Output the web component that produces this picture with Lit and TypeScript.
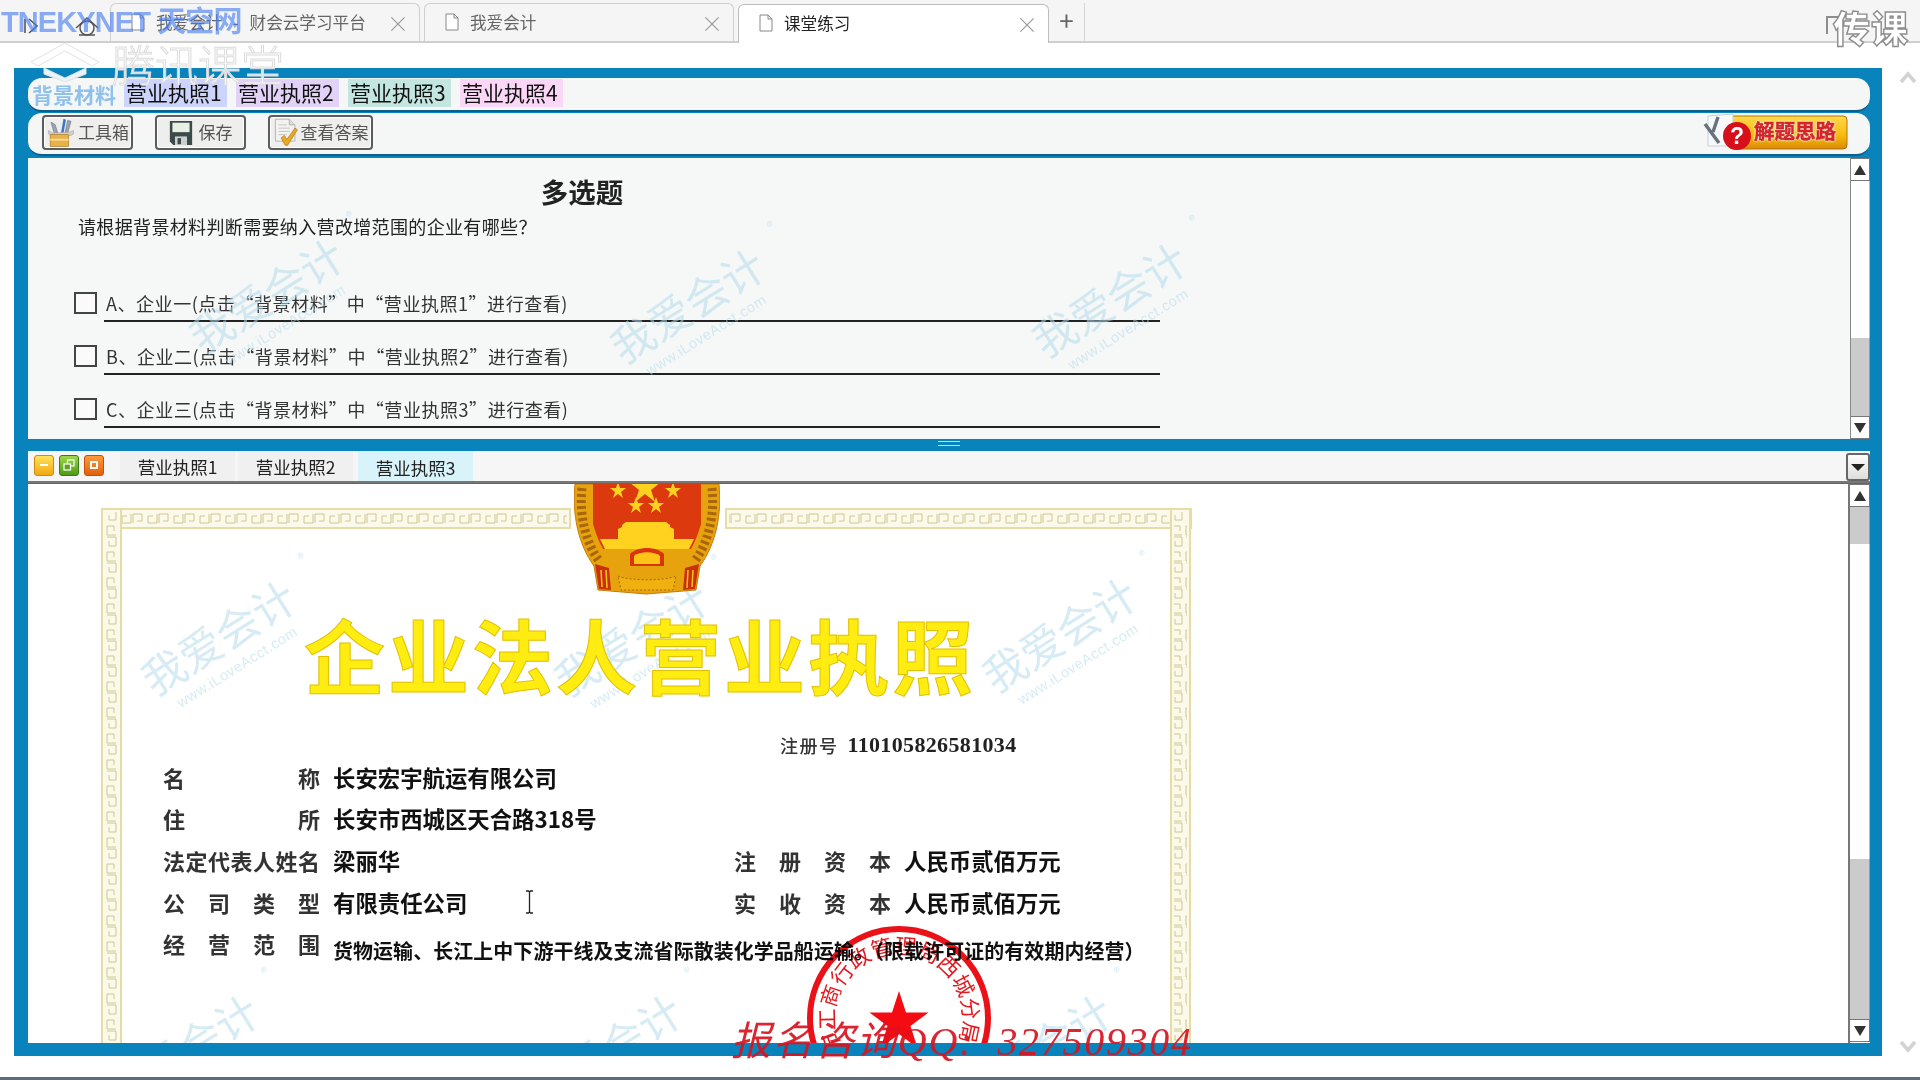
import { LitElement, html, css, svg } from "lit";
import { customElement } from "lit/decorators.js";

const CJK = `"Noto Sans CJK SC", "Liberation Sans", sans-serif`;

const docIcon = html`<svg class="doc" width="14" height="18" viewBox="0 0 14 18"><path d="M1 1h8l4 4v12H1zM9 1v4h4" fill="#fff" stroke="#888" stroke-width="1"/></svg>`;

const toolIcon = html`<svg width="30" height="30" viewBox="0 0 36 34">
  <path d="M6 4l5 3 3 10-4 1zM26 2l-3 14 3 1 4-14z" fill="#9aa6b4" stroke="#667" stroke-width=".7"/>
  <path d="M21 0l3 1-3 16h-3z" fill="#3d74c8"/>
  <path d="M3 14l5 3 20-1 5-2v4l-3 2H5l-2-2z" fill="#d6d0b8" stroke="#99a" stroke-width=".6"/>
  <rect x="5" y="19" width="22" height="14" fill="#eab14a" stroke="#a87720" stroke-width=".8"/>
  <rect x="5" y="24" width="22" height="2" fill="#fbe4a0"/>
</svg>`;

const saveIcon = html`<svg width="24" height="26" viewBox="0 0 28 30">
  <path d="M1 1h26v28H5l-4-4z" fill="#3c4a4a"/>
  <rect x="4" y="3" width="20" height="11" fill="#e8f0e4"/>
  <rect x="7" y="19" width="14" height="10" fill="#c9d0d0"/>
  <rect x="10" y="21" width="4" height="7" fill="#3c4a4a"/>
</svg>`;

const checkIcon = html`<svg width="26" height="30" viewBox="0 0 32 36">
  <path d="M3 1h17l7 7v20H3z" fill="#f2f2f0" stroke="#aaa"/>
  <path d="M20 1v7h7" fill="#ddd" stroke="#aaa"/>
  <path d="M7 8h10M7 12h14M7 16h14M7 20h10" stroke="#bbb"/>
  <path d="M10 24l4-3 3 5 10-14 3 2-12 19h-3z" fill="#eda91d" stroke="#a46b0b" stroke-width=".8"/>
</svg>`;

const TOP_MARKS = [
  [243, 149], [664, 159], [1086, 153],
];
const DOC_MARKS = [
  [195, 165], [608, 166], [1036, 162], [158, 579], [581, 579], [1011, 579],
];

const KEY = svg`<defs><pattern id="keyH" width="26" height="13" patternUnits="userSpaceOnUse" patternTransform="translate(0 28)">
  <path d="M1 11V2h9v7H5M25 2v9h-9V4h5" fill="none" stroke="#cfc690" stroke-width="1"/>
</pattern>
<pattern id="keyV" width="13" height="26" patternUnits="userSpaceOnUse" patternTransform="translate(77 0)">
  <path d="M2 1h9v9H4V5M11 25H2v-9h7v5" fill="none" stroke="#cfc690" stroke-width="1"/>
</pattern></defs>`;

function band(x: number, y: number, w: number, h: number, horizontal: boolean) {
  return svg`<rect x=${x} y=${y} width=${w} height=${h} fill="#fbf9ea" stroke="#e6dca6" stroke-width="2"/>
    <rect x=${x + 3} y=${y + 3} width=${w - 6} height=${h - 6} fill=${horizontal ? "url(#keyH)" : "url(#keyV)"}/>`;
}

@customElement("app-root")
export class AppRoot extends LitElement {
  static styles = css`
    :host { display: block; width: 1920px; height: 1080px; position: relative; overflow: hidden; background: #fff; font-family: ${css([CJK] as any)}; color: #222; }
    * { box-sizing: border-box; }
    .tabbar { height: 43px; background: #f5f5f5; border-bottom: 2px solid #cfcfcf; display: flex; align-items: flex-end; padding-left: 110px; position: relative; }
    .nav { position: absolute; left: 24px; top: 16px; display: flex; gap: 37px; align-items: center; }
    .tab { height: 38px; width: 310px; margin-right: 4px; border: 1px solid #cfcfcf; border-bottom: none; border-radius: 6px 6px 0 0; display: flex; align-items: center; padding: 0 10px 2px 20px; font-size: 16.6px; color: #666; gap: 11px; }
    .tab.active { background: #fff; color: #222; height: 39px; margin-bottom: -2px; margin-right: 0; border-color: #bdbdbd; position: relative; width: 311px; }
    .tab .t { flex: 1; white-space: nowrap; word-spacing: 7px; }
    .tab .x { color: #999; font-size: 22px; font-weight: 300; line-height: 1; }
    .plus { width: 36px; height: 38px; border-right: 1px solid #d6d6d6; font-size: 26px; color: #666; text-align: center; line-height: 34px; }

    .stage { padding: 25px 0 0 14px; }
    .frame { width: 1868px; height: 988px; background: #0883bc; padding: 10px 12px 13px 14px; display: flex; flex-direction: column; }
    .row1 { height: 34px; flex: none; background: #f5f6f6; border-radius: 14px; border-bottom: 2px solid #0c5f88; display: flex; align-items: flex-start; padding: 1px 0 0 4px; gap: 9px; }
    .bglabel { font-size: 21px; line-height: 30px; font-weight: 700; color: #8fc1ec; width: 84px; white-space: nowrap; margin-right: -1px; }
    .mat { width: 103px; height: 28px; font-size: 21px; line-height: 24px; padding: 0 0 2px 2px; display: flex; align-items: center; color: #111; white-space: nowrap; }
    .row2 { height: 43px; flex: none; margin-top: 1px; background: #f5f6f6; border-radius: 14px; border-bottom: 2px solid #0c5f88; display: flex; align-items: center; padding: 0 22px 2px 14px; }
    .btn { height: 35px; border: 2px solid #5c5c5c; border-radius: 4px; background: #eeeeec; display: flex; align-items: center; font-size: 17px; color: #555; box-shadow: inset 0 0 0 1px #fff; margin-right: 22px; white-space: nowrap; justify-content: center; gap: 2px; }
    .btn span { padding-bottom: 3px; }
    .btn svg { flex: none; }
    .help { margin-left: auto; width: 149px; height: 41px; position: relative; }
    .help svg { position: absolute; left: 0; top: 0; }
    .help span { position: absolute; left: 55px; top: 3px; font-size: 20.5px; font-weight: 700; color: #d8262c; -webkit-text-stroke: .4px #c01818; text-shadow: 0 0 2px #fff, 0 0 2px #fff, 0 0 3px #fff; white-space: nowrap; }

    .panel { height: 281px; flex: none; margin-top: 2px; background: #f6f7f7; display: flex; position: relative; overflow: hidden; }
    .qbody { flex: 1; padding-left: 46px; position: relative; min-width: 0; }
    .qtitle { width: 1016px; text-align: center; font-size: 27.5px; font-weight: 700; line-height: 36px; padding-top: 15px; height: 51px; color: #222; }
    .qtext { font-size: 18px; line-height: 28px; margin: 2px 0 0 4px; color: #222; padding-top: 1px; letter-spacing: .35px; }
    .opts { margin-top: 52px; }
    .opt { display: flex; align-items: flex-start; height: 53px; }
    .box { width: 23px; height: 22px; border: 2px solid #444; background: #fafafa; flex: none; }
    .optline { width: 1056px; margin-left: 7px; height: 30px; border-bottom: 2px solid #222; font-size: 18px; line-height: 22px; padding-left: 2px; letter-spacing: .55px; color: #333; white-space: nowrap; }

    .sbar { width: 20px; flex: none; display: flex; flex-direction: column; background: #fff; border-left: 1px solid #888; }
    .sbar.lower { width: 22px; border-left-width: 2px; border-left-color: #777; }
    .sbtn { flex: none; height: 23px; background: #fff; display: flex; align-items: center; justify-content: center; border: 1px solid #777; border-left: none; font-size: 0; }
    .seg { flex: none; }
    .seg.thumb { background: #cacbca; border-right: 1px solid #999; }
    .seg.track { background: #fff; border-right: 1px solid #bbb; }

    .split { height: 12px; flex: none; display: flex; align-items: center; justify-content: center; padding-bottom: 4px; }
    .split i { display: block; width: 22px; height: 5px; border-top: 1px solid #bfe0ee; border-bottom: 1px solid #bfe0ee; }

    .lowbar { height: 32px; flex: none; background: #f6f6f6; border-bottom: 2px solid #777; display: flex; align-items: stretch; position: relative; padding-left: 6px; }
    .lowbtns { display: flex; align-items: center; gap: 5px; width: 86px; flex: none; padding-bottom: 6px; padding-top: 4px; }
    .lowbtn { width: 20px; height: 21px; border-radius: 3px; display: flex; align-items: center; justify-content: center; flex: none; }
    .lowtab { width: 115px; flex: none; display: flex; align-items: center; justify-content: center; font-size: 17.5px; margin-right: 3px; background: #f0f0f0; color: #222; white-space: nowrap; }
    .lowtab.on { background: #d9f3fb; margin-left: 2px; padding-top: 3px; }
    .drop { position: absolute; right: 0; top: 2px; width: 24px; height: 28px; border: 2px solid #666; border-radius: 3px; background: linear-gradient(#fdfdfd, #dcdedc); display: flex; align-items: center; justify-content: center; }

    .docwrap { flex: 1; display: flex; background: #fff; min-height: 0; position: relative; margin-top: 1px; }
    .doc-pane { flex: 1; position: relative; overflow: hidden; background: #fff; min-width: 0; }
    .border { position: absolute; left: 0; top: 0; }
    .cert { padding: 124px 0 0 135px; position: relative; }
    .ctitle { font-size: 81px; line-height: 90px; letter-spacing: 3px; margin-left: 141px; font-weight: 700; color: #ffec10; -webkit-text-stroke: 1px #e2c000; white-space: nowrap; }
    .reg { margin: 35px 0 0 617px; height: 24px; display: flex; align-items: center; gap: 9px; white-space: nowrap; }
    .reg b { font-size: 18px; font-weight: 500; color: #333; letter-spacing: 1.5px; }
    .reg span { font-family: "Liberation Serif", serif; font-size: 22px; font-weight: 700; letter-spacing: .35px; color: #222; }
    .grid { display: grid; grid-template-columns: 170px 401px 170px auto; grid-auto-rows: 41.6px; margin-top: -1px; align-items: center; }
    .lab { width: 157px; font-size: 22px; font-weight: 700; color: #333; text-align: justify; text-align-last: justify; line-height: 30px; white-space: nowrap; }
    .val { font-size: 22.4px; font-weight: 700; color: #111; white-space: nowrap; line-height: 30px; display: flex; align-items: center; }
    .scope { grid-column: 2 / 5; font-size: 19.95px; font-weight: 700; padding-top: 16px; letter-spacing: .1px; }
    .ibeam { margin-left: 58px; flex: none; }

    .mark { position: absolute; width: 0; height: 0; color: #b5dcec; pointer-events: none; }
    .mark .in { position: absolute; left: -110px; top: -40px; width: 220px; transform: rotate(-32deg); text-align: center; white-space: nowrap; }
    .mark .big { font-size: 43px; line-height: 50px; opacity: .55; }
    .mark .small { font-family: "Liberation Sans", sans-serif; font-size: 14.5px; line-height: 17px; opacity: .55; letter-spacing: .6px; margin-top: 4px; }
    .mark .r { position: absolute; right: -6px; top: -6px; font-size: 13px; opacity: .6; }

    .emblem { position: absolute; left: 546px; top: 0; }
    .seal { position: absolute; left: 771px; top: 434px; mix-blend-mode: multiply; }

    .overlay { position: absolute; pointer-events: none; white-space: nowrap; }
    .tneky { left: 1px; top: -2px; font-family: "Liberation Sans", ${css([CJK] as any)}; font-size: 29px; font-weight: 700; color: rgba(70, 125, 240, .62); letter-spacing: -.9px; }
    .tencent { left: 112px; top: 31px; font-size: 43px; line-height: 64px; color: rgba(255, 255, 255, .85); -webkit-text-stroke: 1px #dcdcdc; font-weight: 300; }
    .tlogo { left: 30px; top: 42px; }
    .chuan { left: 1833px; top: 5px; font-size: 37px; line-height: 44px; font-weight: 900; color: #fff; -webkit-text-stroke: 1.4px #8d8d8d; letter-spacing: 1px; }
    .chuanb { left: 1826px; top: 16px; }
    .qq { left: 731px; top: 1017px; font-family: "Liberation Serif", ${css([CJK] as any)}; font-style: italic; font-size: 40px; line-height: 50px; color: rgba(216, 20, 32, .92); letter-spacing: 1.7px; }
    .chev { position: absolute; left: 1899px; }
    .foot { position: absolute; left: 0; right: 0; top: 1077px; height: 3px; background: #5d6c7a; }
  `;

  private mark(x: number, y: number) {
    return html`<div class="mark" style="left:${x}px;top:${y}px"><div class="in"><span class="r">®</span><div class="big">我爱会计</div><div class="small">www.iLoveAcct.com</div></div></div>`;
  }

  private up(color = "#333") {
    return html`<svg width="12" height="10" viewBox="0 0 12 10"><path d="M6 0l6 10H0z" fill=${color}/></svg>`;
  }
  private down(color = "#333") {
    return html`<svg width="12" height="10" viewBox="0 0 12 10"><path d="M0 0h12L6 10z" fill=${color}/></svg>`;
  }

  private scrollbar(segs: Array<[string, number]>, lower = false) {
    return html`<div class="sbar ${lower ? "lower" : ""}">
      <div class="sbtn">${this.up()}</div>
      ${segs.map(([k, h]) => html`<div class="seg ${k}" style="height:${h}px"></div>`)}
      <div class="sbtn">${this.down()}</div>
    </div>`;
  }

  render() {
    const opts = [
      "A、企业一(点击“背景材料”中“营业执照1”进行查看)",
      "B、企业二(点击“背景材料”中“营业执照2”进行查看)",
      "C、企业三(点击“背景材料”中“营业执照3”进行查看)",
    ];
    const mats = [
      ["营业执照1", "#ccd4fb"], ["营业执照2", "#e2d2f8"], ["营业执照3", "#c3e6e0"], ["营业执照4", "#fad6f7"],
    ];
    return html`
      <div class="tabbar">
        <div class="nav">
          <svg width="14" height="16" viewBox="0 0 14 16"><path d="M1 1v14M5 1l8 7-8 7" fill="none" stroke="#555" stroke-width="1.6"/></svg>
          <svg width="24" height="20" viewBox="0 0 24 20"><path d="M1 12L12 2l11 10" fill="none" stroke="#555" stroke-width="1.5"/><circle cx="12" cy="12" r="7" fill="none" stroke="#555" stroke-width="1.5"/><path d="M4 19h16" stroke="#555" stroke-width="1.5"/></svg>
        </div>
        <div class="tab">${docIcon}<span class="t">我爱会计 - 财会云学习平台</span><span class="x">×</span></div>
        <div class="tab">${docIcon}<span class="t">我爱会计</span><span class="x">×</span></div>
        <div class="tab active">${docIcon}<span class="t">课堂练习</span><span class="x">×</span></div>
        <div class="plus">+</div>
      </div>

      <div class="stage"><div class="frame">
        <div class="row1">
          <span class="bglabel">背景材料</span>
          ${mats.map(([t, c]) => html`<span class="mat" style="background:${c}">${t}</span>`)}
        </div>
        <div class="row2">
          <div class="btn" style="width:91px">${toolIcon}<span>工具箱</span></div>
          <div class="btn" style="width:91px;gap:6px">${saveIcon}<span>保存</span></div>
          <div class="btn" style="width:105px">${checkIcon}<span>查看答案</span></div>
          <div class="help">
            <svg width="149" height="41" viewBox="0 0 149 41">
              <defs><linearGradient id="gold" x1="0" y1="0" x2="0" y2="1"><stop offset="0" stop-color="#ffd94a"/><stop offset=".6" stop-color="#f7b90c"/><stop offset="1" stop-color="#d98a07"/></linearGradient></defs>
              <rect x="30" y="4" width="118" height="33" rx="4" fill="url(#gold)" stroke="#b5700e"/>
              <path d="M9 4L34 2v32H9z" fill="#f7f8fa" stroke="#c8d0dc"/>
              <path d="M6 12l14 19M19 5l-5 15" stroke="#66727c" stroke-width="3.400" fill="none"/>
              <circle cx="38" cy="24" r="14" fill="#d50f1c"/>
              <text x="38" y="32" text-anchor="middle" font-size="23" font-weight="700" fill="#fff" font-family="Liberation Sans, sans-serif">?</text>
            </svg>
            <span>解题思路</span>
          </div>
        </div>

        <div class="panel">
          <div class="qbody">
            ${TOP_MARKS.map(([x, y]) => this.mark(x, y))}
            <div class="qtitle">多选题</div>
            <div class="qtext">请根据背景材料判断需要纳入营改增范围的企业有哪些？</div>
            <div class="opts">
              ${opts.map((o) => html`<div class="opt"><div class="box"></div><div class="optline">${o}</div></div>`)}
            </div>
          </div>
          ${this.scrollbar([["track", 157], ["thumb", 78]])}
        </div>

        <div class="split"><i></i></div>

        <div class="lowbar">
          <div class="lowbtns">
            <div class="lowbtn" style="background:linear-gradient(#ffe25c,#f2a80f);border:1px solid #d08a10"><svg width="8" height="2"><rect width="8" height="2" fill="#fff"/></svg></div>
            <div class="lowbtn" style="background:linear-gradient(#9ed84a,#4e9a16);border:1px solid #3d7a12"><svg width="12" height="12" viewBox="0 0 12 12"><rect x="4.500" y="1" width="6.500" height="6" fill="none" stroke="#fff" stroke-width="1.200"/><rect x="1" y="5" width="6.500" height="6" fill="#5ba41c" stroke="#fff" stroke-width="1.200"/></svg></div>
            <div class="lowbtn" style="background:linear-gradient(#ff9a3c,#e45f0c);border:1px solid #c64f08"><svg width="8" height="8"><rect x="1" y="1" width="6" height="6" fill="none" stroke="#fff" stroke-width="2"/></svg></div>
          </div>
          <div class="lowtab">营业执照1</div>
          <div class="lowtab">营业执照2</div>
          <div class="lowtab on">营业执照3</div>
          <div class="drop"><svg width="14" height="7" viewBox="0 0 14 7"><path d="M0 0h14L7 7z" fill="#222"/></svg></div>
        </div>

        <div class="docwrap">
          <div class="doc-pane">
            ${DOC_MARKS.map(([x, y]) => this.mark(x, y))}
            <svg class="border" width="1170" height="560" viewBox="0 0 1170 560">
              ${KEY}
              ${band(74, 25, 468, 19, true)}
              ${band(698, 25, 465, 19, true)}
              ${band(74, 25, 19, 540, false)}
              ${band(1143, 25, 19, 540, false)}
            </svg>
            <svg class="emblem" width="146" height="112" viewBox="0 0 146 112">
              <path d="M1 0C-2 30 4 60 20 82l4 24 48 4 50-4 4-24C142 60 148 30 145 0z" fill="#e7a30e" stroke="#c47b0c"/>
              <path d="M8 4C5 32 12 60 26 78M138 4c3 28-4 56-18 74" fill="none" stroke="#a9660a" stroke-width="9" stroke-dasharray="3 3"/>
              <path d="M19 0h108v40c-3 10-6 18-10 25H29c-4-7-7-15-10-25z" fill="#dc3a0e"/>
              <g fill="#ffd21f">
                <path d="M71 -14l4 12 12 0-10 8 4 12-10-8-10 8 4-12-10-8 12 0z"/>
                <path d="M44 -2l2 6 6 0-5 4 2 6-5-4-5 4 2-6-5-4 6 0z"/>
                <path d="M99 -2l2 6 6 0-5 4 2 6-5-4-5 4 2-6-5-4 6 0z"/>
                <path d="M62 13l2 6 6 0-5 4 2 6-5-4-5 4 2-6-5-4 6 0z"/>
                <path d="M82 13l2 6 6 0-5 4 2 6-5-4-5 4 2-6-5-4 6 0z"/>
                <path d="M52 38h40l4 3v2l4 2v10H44V45l4-2v-2z"/>
                <path d="M26 55h94l-5 10H31z"/>
              </g>
              <path d="M56 70c8-8 26-8 34 0v12H56z" fill="#d8350e"/>
              <path d="M60 72c6-5 20-5 26 0v8H60z" fill="#ffc416"/>
              <path d="M21 80l14 4 2 22-12-1zM125 80l-14 4-2 22 12-1z" fill="#c9300e"/>
              <path d="M27 86l1 17M32 86l1 18M119 86l-1 17M114 86l-1 18" stroke="#ffc416" stroke-width="1.500"/>
              <path d="M44 92c10 5 48 5 58 0l-3 14H47z" fill="#f0b010" stroke="#a9660a" stroke-dasharray="2 2"/>
            </svg>
            <div class="cert">
              <div class="ctitle">企业法人营业执照</div>
              <div class="reg"><b>注册号</b><span>110105826581034</span></div>
              <div class="grid">
                <div class="lab">名称</div><div class="val" style="grid-column:2/5">长安宏宇航运有限公司</div>
                <div class="lab">住所</div><div class="val" style="grid-column:2/5">长安市西城区天合路318号</div>
                <div class="lab">法定代表人姓名</div><div class="val">梁丽华</div><div class="lab">注册资本</div><div class="val">人民币贰佰万元</div>
                <div class="lab">公司类型</div>
                <div class="val">有限责任公司<svg class="ibeam" width="9" height="24" viewBox="0 0 9 24"><path d="M1 1h2.500l1 1 1-1H8M4.500 2v20M1 23h2.500l1-1 1 1H8" fill="none" stroke="#222" stroke-width="1.300"/></svg></div>
                <div class="lab">实收资本</div><div class="val">人民币贰佰万元</div>
                <div class="lab">经营范围</div><div class="val scope">货物运输、长江上中下游干线及支流省际散装化学品船运输。（限载许可证的有效期内经营）</div>
              </div>
            </div>
            <svg class="seal" width="200" height="200" viewBox="0 0 200 200">
              <defs><path id="arc" d="M44.600 132A64 64 0 1 1 155.400 132"/></defs>
              <circle cx="100" cy="100" r="89" fill="none" stroke="#ea1218" stroke-width="6"/>
              <text font-size="21.500" fill="#e4181e" font-family="Noto Sans CJK SC, sans-serif"><textPath href="#arc">市工商行政管理局西城分局</textPath></text>
              <path d="M100 73l7 21.500h22.500l-18 13.500 7 22-18.500-14-18.500 14 7-22-18-13.500H93z" fill="#f40c12"/>
            </svg>
          </div>
          ${this.scrollbar([["thumb", 37], ["track", 315], ["thumb", 160]], true)}
        </div>
      </div></div>

      <div class="overlay tneky">TNEKYNET 天空网</div>
      <svg class="overlay tlogo" width="70" height="40" viewBox="0 0 70 40">
        <path d="M1 20L35 1l34 19-7 4L35 9 8 24z" fill="#fff" stroke="#e2e2e2"/>
        <path d="M14 26l21 10 21-10v6L35 40 14 32z" fill="#e9f3f8" stroke="#e2e2e2"/>
      </svg>
      <div class="overlay tencent">腾讯课堂</div>
      <svg class="overlay chuanb" width="16" height="20" viewBox="0 0 16 20"><path d="M1 18V1h13" fill="none" stroke="#8d8d8d" stroke-width="2"/></svg>
      <div class="overlay chuan">传课</div>
      <div class="overlay qq">报名咨询QQ:&nbsp;&nbsp;327509304</div>
      <svg class="chev" style="top:70px" width="18" height="14" viewBox="0 0 18 14"><path d="M2 12l7-8 7 8" fill="none" stroke="#d2d2d2" stroke-width="3.500"/></svg>
      <svg class="chev" style="top:1040px" width="18" height="14" viewBox="0 0 18 14"><path d="M2 2l7 8 7-8" fill="none" stroke="#d2d2d2" stroke-width="3.500"/></svg>
      <div class="foot"></div>
    `;
  }
}
